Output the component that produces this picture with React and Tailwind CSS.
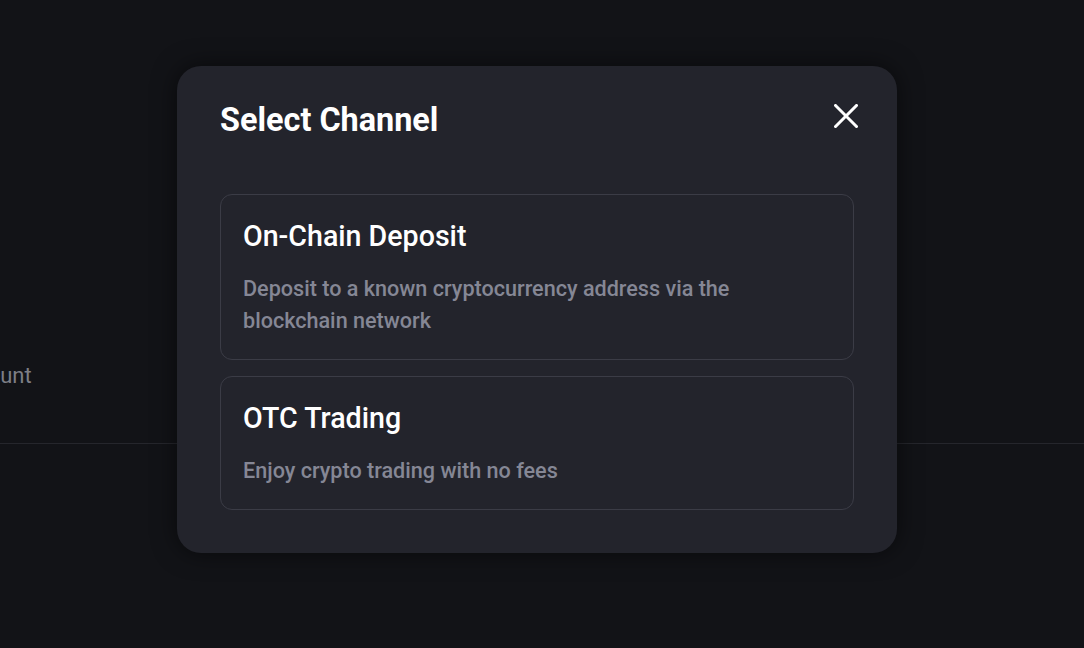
import React from "react";

const channels = [
  {
    title: "On-Chain Deposit",
    desc: "Deposit to a known cryptocurrency address via the blockchain network",
  },
  {
    title: "OTC Trading",
    desc: "Enjoy crypto trading with no fees",
  },
];

const CloseIcon = () => (
  <svg width="24" height="24" viewBox="0 0 24 24" className="mt-[4px] mr-[-4px]">
    <path d="M1.5 1.5L22.5 22.5M22.5 1.5L1.5 22.5" stroke="#fff" strokeWidth="3" strokeLinecap="square" />
  </svg>
);

export default function App() {
  return (
    <div className="relative w-full h-[648px] overflow-hidden bg-[#121317] font-['Roboto',sans-serif]">
      {/* page behind the dialog */}
      <div className="pt-[362px] pb-[53px] border-b border-[#25262c]">
        <div className="ml-[-46px] text-[22px] leading-[28px] text-[#7d7e86]">Amount</div>
      </div>

      {/* dialog */}
      <div className="absolute left-[177px] top-[66px] w-[720px] rounded-[24px] bg-[#23242c] pt-[34px] px-[43px] pb-[43px] shadow-[0_0_24px_rgba(0,0,0,0.55)]">
        <div className="flex items-start justify-between mb-[54px]">
          <h2 className="text-[32.4px] leading-[40px] font-bold text-white">Select Channel</h2>
          <CloseIcon />
        </div>

        <div className="flex flex-col gap-4">
          {channels.map((c) => (
            <div
              key={c.title}
              className="rounded-[12px] border border-[#3b3c46] px-[22px] py-[22px]"
            >
              <div className="text-[28.6px] leading-[38px] font-medium text-white">{c.title}</div>
              <p className="mt-[18px] text-[21.6px] leading-[32px] font-medium text-[#858795] max-w-[540px]">
                {c.desc}
              </p>
            </div>
          ))}
        </div>
      </div>
    </div>
  );
}
